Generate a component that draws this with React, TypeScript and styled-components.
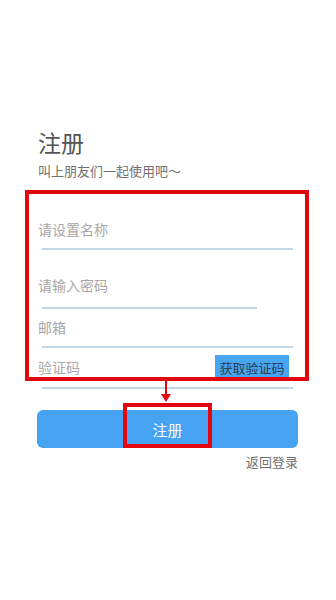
import React from "react";
import styled, { createGlobalStyle } from "styled-components";

const Global = createGlobalStyle`
  html, body { margin: 0; padding: 0; background: #ffffff; }
  body { font-family: "Noto Sans CJK SC", "Noto Sans", sans-serif; }
  * { box-sizing: border-box; }
`;

const Page = styled.div`
  position: relative;
  width: 336px;
  height: 600px;
  padding: 128px 38px 0 38px;
  background: #fff;
`;

const Title = styled.h1`
  margin: 0;
  font-size: 23px;
  line-height: 28px;
  font-weight: 400;
  color: #555;
`;

const Subtitle = styled.p`
  margin: 6px 0 0 0;
  font-size: 13px;
  line-height: 18px;
  color: #707070;
`;

const Form = styled.div`
  display: flex;
  flex-direction: column;
  margin-top: 37px;
`;

const Field = styled.div<{ $top: number }>`
  display: flex;
  flex-direction: column;
  margin-top: ${(p) => p.$top}px;
`;

const Row = styled.div`
  display: flex;
  align-items: center;
  justify-content: space-between;
  height: 24px;
  padding-right: 9px;
`;

const Placeholder = styled.span`
  font-size: 14px;
  color: #a8a8a8;
`;

const Underline = styled.div<{ $gap: number; $width: number }>`
  margin-top: ${(p) => p.$gap}px;
  margin-left: 4px;
  width: ${(p) => p.$width}px;
  height: 2px;
  background: #c2d8e8;
`;

const CodeButton = styled.div`
  display: flex;
  align-items: center;
  justify-content: center;
  width: 74px;
  height: 25px;
  background: #48a5f0;
  color: #2f3f52;
  font-size: 13px;
`;

const Submit = styled.div`
  display: flex;
  align-items: center;
  justify-content: center;
  margin-top: 21px;
  margin-left: -1px;
  width: 261px;
  height: 38px;
  border-radius: 6px;
  background: #45a3f2;
  color: #fff;
  font-size: 15px;
`;

const Back = styled.div`
  margin-top: 4px;
  width: 261px;
  margin-left: -1px;
  text-align: right;
  font-size: 13px;
  line-height: 19px;
  color: #707070;
`;

const Annotation = styled.div<{ $l: number; $t: number; $w: number; $h: number }>`
  position: absolute;
  left: ${(p) => p.$l}px;
  top: ${(p) => p.$t}px;
  width: ${(p) => p.$w}px;
  height: ${(p) => p.$h}px;
  border: 4px solid #e2070e;
  pointer-events: none;
`;

const Arrow = styled.svg`
  position: absolute;
  left: 160px;
  top: 380px;
  pointer-events: none;
`;

export default function App() {
  return (
    <>
      <Global />
      <Page>
        <Title>注册</Title>
        <Subtitle>叫上朋友们一起使用吧～</Subtitle>
        <Form>
          <Field $top={0}>
            <Row>
              <Placeholder>请设置名称</Placeholder>
            </Row>
            <Underline $gap={7} $width={251} />
          </Field>
          <Field $top={23}>
            <Row>
              <Placeholder>请输入密码</Placeholder>
            </Row>
            <Underline $gap={10} $width={215} />
          </Field>
          <Field $top={6}>
            <Row>
              <Placeholder>邮箱</Placeholder>
            </Row>
            <Underline $gap={7} $width={251} />
          </Field>
          <Field $top={7}>
            <Row>
              <Placeholder>验证码</Placeholder>
              <CodeButton>获取验证码</CodeButton>
            </Row>
            <Underline $gap={8} $width={251} />
          </Field>
        </Form>
        <Submit>注册</Submit>
        <Back>返回登录</Back>

        <Annotation $l={25} $t={190} $w={284} $h={191} />
        <Annotation $l={123} $t={403} $w={89} $h={45} />
        <Arrow width="12" height="24" viewBox="0 0 12 24">
          <line x1="6" y1="0" x2="6" y2="16" stroke="#e2070e" strokeWidth="2" />
          <polygon points="1,14 11,14 6,22" fill="#e2070e" />
        </Arrow>
      </Page>
    </>
  );
}
